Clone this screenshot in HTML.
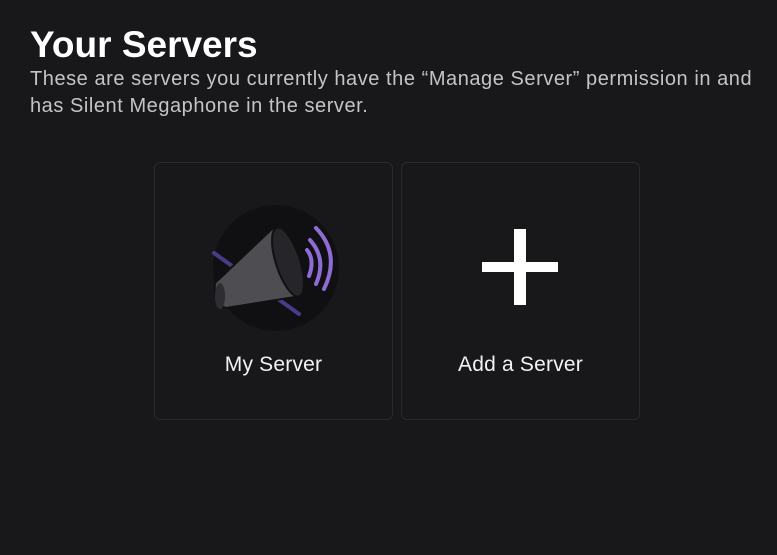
<!DOCTYPE html>
<html><head><meta charset="utf-8"><style>
html,body{margin:0;padding:0;background:#18181b;width:777px;height:555px;overflow:hidden;font-family:"Liberation Sans",Arial,sans-serif;}
h1{position:absolute;left:30px;top:24px;margin:0;font-size:37px;font-weight:bold;color:#fff;letter-spacing:0;line-height:42px;}
p{position:absolute;left:30px;top:66px;margin:0;font-size:20px;line-height:27px;color:#c4c4c8;width:740px;letter-spacing:0.55px;}
.card{position:absolute;top:162px;width:239px;height:258px;border:1px solid #2a2a2e;border-radius:6px;background:#18181b;box-sizing:border-box;}
.lbl{position:absolute;left:0;right:0;top:190px;text-align:center;color:#f2f2f2;font-size:21px;line-height:24px;letter-spacing:0.2px;}
.pv{position:absolute;left:514px;top:229px;width:12px;height:76px;background:#fff;}
.ph{position:absolute;left:482px;top:262px;width:76px;height:10px;background:#fff;}
</style></head><body>
<h1>Your Servers</h1>
<p>These are servers you currently have the “Manage Server” permission in and has Silent Megaphone in the server.</p>
<div class="card" style="left:154px">
<svg style="position:absolute;left:56px;top:41px" width="128" height="128" viewBox="0 0 128 128">
<circle cx="65" cy="64" r="63" fill="#101012"/>
<line x1="3" y1="49" x2="88" y2="110" stroke="#4b3a8a" stroke-width="4" stroke-linecap="round"/>
<path d="M4 79 L62 24 L90 92 L15 104 Q2 100 4 79Z" fill="#4d4d52" stroke="#111" stroke-width="2"/>
<ellipse cx="77" cy="58" rx="12" ry="36" transform="rotate(-18 77 58)" fill="#26262a" stroke="#111" stroke-width="2"/>
<ellipse cx="9" cy="92" rx="5" ry="13" fill="#2e2e32"/>
<path d="M96 46 Q104 56 98 72" stroke="#8f6bd6" stroke-width="4" fill="none" stroke-linecap="round"/>
<path d="M99 36 Q116 55 105 80" stroke="#8f6bd6" stroke-width="4" fill="none" stroke-linecap="round"/>
<path d="M105 24 Q130 50 113 85" stroke="#8f6bd6" stroke-width="4" fill="none" stroke-linecap="round"/>
</svg>
<div class="lbl">My Server</div>
</div>
<div class="card" style="left:401px"><div class="lbl">Add a Server</div></div>
<div class="pv"></div><div class="ph"></div>
</body></html>
